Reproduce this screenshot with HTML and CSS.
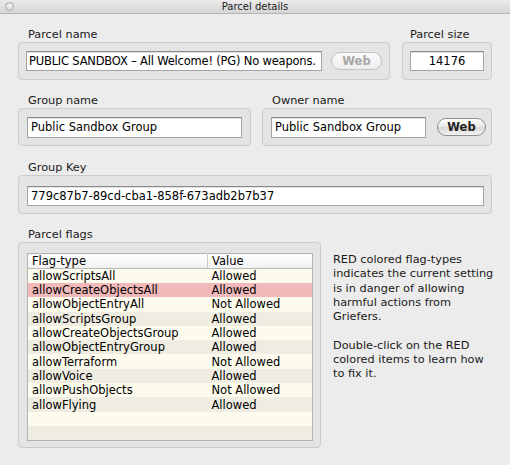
FILE: index.html
```html
<!DOCTYPE html>
<html>
<head>
<meta charset="utf-8">
<link rel="stylesheet" href="styles.css">
</head>
<body>
<div class="window">
  <div class="titlebar">
    <span class="close"></span>
    <span class="title">Parcel details</span>
  </div>
  <div class="content">
    <div class="row row1">
      <div class="group g-pname">
        <div class="label">Parcel name</div>
        <div class="box">
          <div class="field f-pname">PUBLIC SANDBOX – All Welcome! (PG) No weapons.</div>
          <div class="btn disabled">Web</div>
        </div>
      </div>
      <div class="group g-psize">
        <div class="label">Parcel size</div>
        <div class="box">
          <div class="field f-psize">14176</div>
        </div>
      </div>
    </div>
    <div class="row row2">
      <div class="group g-gname">
        <div class="label">Group name</div>
        <div class="box">
          <div class="field f-gname">Public Sandbox Group</div>
        </div>
      </div>
      <div class="group g-oname">
        <div class="label">Owner name</div>
        <div class="box">
          <div class="field f-oname">Public Sandbox Group</div>
          <div class="btn">Web</div>
        </div>
      </div>
    </div>
    <div class="row row3">
      <div class="group g-gkey">
        <div class="label">Group Key</div>
        <div class="box">
          <div class="field f-gkey">779c87b7-89cd-cba1-858f-673adb2b7b37</div>
        </div>
      </div>
    </div>
    <div class="row row4">
      <div class="group g-flags">
        <div class="label">Parcel flags</div>
        <div class="box">
          <table class="flags">
            <thead>
              <tr><th class="c1">Flag-type</th><th class="c2">Value</th></tr>
            </thead>
            <tbody>
              <tr><td>allowScriptsAll</td><td>Allowed</td></tr>
              <tr class="red"><td>allowCreateObjectsAll</td><td>Allowed</td></tr>
              <tr><td>allowObjectEntryAll</td><td>Not Allowed</td></tr>
              <tr><td>allowScriptsGroup</td><td>Allowed</td></tr>
              <tr><td>allowCreateObjectsGroup</td><td>Allowed</td></tr>
              <tr><td>allowObjectEntryGroup</td><td>Allowed</td></tr>
              <tr><td>allowTerraform</td><td>Not Allowed</td></tr>
              <tr><td>allowVoice</td><td>Allowed</td></tr>
              <tr><td>allowPushObjects</td><td>Not Allowed</td></tr>
              <tr><td>allowFlying</td><td>Allowed</td></tr>
              <tr class="empty"><td></td><td></td></tr>
              <tr class="empty"><td></td><td></td></tr>
            </tbody>
          </table>
        </div>
      </div>
      <div class="note">
        <p>RED colored flag-types indicates the current setting is in danger of allowing harmful actions from Griefers.</p>
        <p>Double-click on the RED colored items to learn how to fix it.</p>
      </div>
    </div>
  </div>
</div>
</body>
</html>
```

FILE: styles.css
```css
* { box-sizing: border-box; }
html, body { margin: 0; padding: 0; }
body {
  width: 510px;
  height: 465px;
  overflow: hidden;
  background: #ececec;
  font-family: "DejaVu Sans", "Liberation Sans", sans-serif;
  font-size: 11px;
  color: #000;
}
.window { width: 510px; height: 465px; background: #ececec; }
.titlebar {
  position: relative;
  height: 14px;
  background: linear-gradient(#ebebeb, #d5d5d5);
  border-bottom: 1px solid #b4b4b4;
  text-align: center;
  font-size: 10px;
  line-height: 13px;
  color: #222;
}
.close {
  position: absolute;
  left: 5px;
  top: 2px;
  width: 9px;
  height: 9px;
  border-radius: 50%;
  border: 1px solid #a8a8a8;
  background: radial-gradient(circle at 50% 35%, #f4f4f4, #cfcfcf);
}
.content { padding: 0 0 0 18px; }
.row { display: flex; }
.label {
  padding-left: 10px;
  height: 15px;
  line-height: 15px;
  font-size: 11.3px;
  color: #1a1a1a;
}
.box {
  background: #e4e4e4;
  border: 1px solid #cbcbcb;
  border-radius: 4px;
  display: flex;
  align-items: flex-start;
}
.field {
  background: #fff;
  border: 1px solid #a4a4a4;
  border-top-color: #8a8a8a;
  box-shadow: inset 0 1px 0 #e2e2e2;
  height: 20px;
  line-height: 18px;
  padding-left: 3px;
  white-space: nowrap;
  overflow: hidden;
  font-size: 11.5px;
}
.btn {
  height: 18px;
  line-height: 16px;
  border: 1px solid #8f8f8f;
  border-radius: 9px;
  background: linear-gradient(#ffffff, #e6e6e6 50%, #d9d9d9 51%, #f2f2f2);
  text-align: center;
  font-size: 11.5px;
  font-weight: bold;
  color: #222;
}
.btn.disabled { color: #a8a8a8; border-color: #c2c2c2; background: linear-gradient(#fafafa, #eeeeee); }

.row1 { padding-top: 13px; }
.g-pname .box { width: 372px; height: 38px; padding: 8px 0 0 7px; }
.f-pname { width: 296px; letter-spacing: -0.2px; padding-left: 2px; }
.g-pname .btn { width: 51px; margin: 1px 0 0 9px; }
.g-psize { margin-left: 12px; }
.g-psize .label { padding-left: 8px; }
.g-psize .box { width: 90px; height: 38px; padding: 8px 0 0 7px; }
.f-psize { width: 74px; text-align: center; padding-left: 0; }

.row2 { padding-top: 13px; }
.g-gname .box { width: 233px; height: 38px; padding: 8px 0 0 8px; }
.f-gname { width: 215px; height: 21px; }
.g-oname { margin-left: 11px; }
.g-oname .box { width: 230px; height: 38px; padding: 8px 0 0 8px; }
.f-oname { width: 155px; height: 21px; }
.g-oname .btn { width: 49px; margin: 1px 0 0 11px; }

.row3 { padding-top: 14px; }
.g-gkey .box { width: 474px; height: 39px; padding: 10px 0 0 8px; }
.f-gkey { width: 457px; }

.row4 { padding-top: 13px; }
.g-flags .box { width: 303px; height: 206px; padding: 10px 0 0 8px; }
.flags {
  width: 286px;
  border-collapse: collapse;
  table-layout: fixed;
  border: 1px solid #b3b3b3;
  font-size: 11.5px;
}
.flags th {
  height: 15px;
  padding: 0 0 0 4px;
  text-align: left;
  font-weight: normal;
  background: linear-gradient(#ffffff, #f0f0f0);
  border-bottom: 1px solid #b8b8b8;
  line-height: 14px;
}
.flags th.c1 { width: 180px; border-right: 1px solid #c9c9c9; }
.flags td {
  height: 14.3px;
  padding: 0 0 0 4px;
  line-height: 14px;
  white-space: nowrap;
  overflow: hidden;
}
.flags tbody tr:nth-child(odd) { background: #fdfbee; }
.flags tbody tr:nth-child(even) { background: #efede2; }
.flags tbody tr.red { background: #f2b9bb; }
.note {
  width: 189px;
  padding: 26px 12px 0 12px;
  font-size: 11.3px;
  line-height: 14.3px;
  color: #1a1a1a;
}
.note p { margin: 0 0 14.3px 0; }
```
